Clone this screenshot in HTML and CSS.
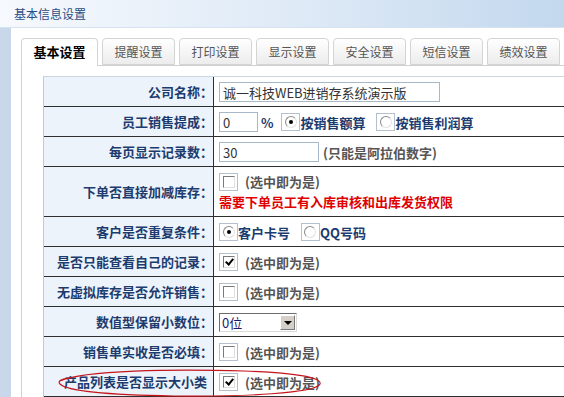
FILE: index.html
```html
<!DOCTYPE html>
<html lang="zh-CN">
<head>
    <meta charset="UTF-8">
    <title>基本信息设置</title>
    <link rel="stylesheet" href="styles.css">
</head>
<body>
    <div class="title-bar">基本信息设置</div>
    <div class="page">
        <div class="tabs">
            <div class="tab active">基本设置</div>
            <div class="tab">提醒设置</div>
            <div class="tab">打印设置</div>
            <div class="tab">显示设置</div>
            <div class="tab">安全设置</div>
            <div class="tab">短信设置</div>
            <div class="tab">绩效设置</div>
        </div>
        <div class="tab-panel">
            <table class="settings">
                <tr>
                    <td class="label">公司名称：</td>
                    <td class="field"><input class="text-input wide" type="text" value="诚一科技WEB进销存系统演示版"></td>
                </tr>
                <tr>
                    <td class="label">员工销售提成：</td>
                    <td class="field">
                        <input class="text-input small" type="text" value="0"><span class="blue-text pct">%</span>
                        <span class="box"><span class="radio on"></span></span><span class="blue-text">按销售额算</span>
                        <span class="box gap"><span class="radio"></span></span><span class="blue-text">按销售利润算</span>
                    </td>
                </tr>
                <tr>
                    <td class="label">每页显示记录数：</td>
                    <td class="field"><input class="text-input medium" type="text" value="30"><span class="gray-text note">(只能是阿拉伯数字)</span></td>
                </tr>
                <tr class="tall">
                    <td class="label">下单否直接加减库存：</td>
                    <td class="field">
                        <div class="line"><span class="box"><span class="check"></span></span><span class="gray-text yes">(选中即为是)</span></div>
                        <div class="line red-text">需要下单员工有入库审核和出库发货权限</div>
                    </td>
                </tr>
                <tr>
                    <td class="label">客户是否重复条件：</td>
                    <td class="field">
                        <span class="box"><span class="radio on"></span></span><span class="blue-text">客户卡号</span>
                        <span class="box gap"><span class="radio"></span></span><span class="blue-text">QQ号码</span>
                    </td>
                </tr>
                <tr>
                    <td class="label">是否只能查看自己的记录：</td>
                    <td class="field"><span class="box"><span class="check on"></span></span><span class="gray-text yes">(选中即为是)</span></td>
                </tr>
                <tr>
                    <td class="label">无虚拟库存是否允许销售：</td>
                    <td class="field"><span class="box"><span class="check"></span></span><span class="gray-text yes">(选中即为是)</span></td>
                </tr>
                <tr>
                    <td class="label">数值型保留小数位：</td>
                    <td class="field">
                        <span class="select"><span class="select-value">0位</span><span class="select-btn"></span></span>
                    </td>
                </tr>
                <tr>
                    <td class="label">销售单实收是否必填：</td>
                    <td class="field"><span class="box"><span class="check"></span></span><span class="gray-text yes">(选中即为是)</span></td>
                </tr>
                <tr>
                    <td class="label no-colon">
                        产品列表是否显示大小类
                        <svg class="circle-mark" width="272" height="30" viewBox="0 0 272 30">
                            <path d="M6 13 C 30 2, 120 1, 190 3 C 240 5, 268 9, 266 16 C 262 25, 190 29, 120 28 C 60 27, 14 24, 6 16 C 3 13, 8 11, 14 10" fill="none" stroke="#c4161c" stroke-width="1.2"/>
                        </svg>
                    </td>
                    <td class="field"><span class="box"><span class="check on"></span></span><span class="gray-text yes">(选中即为是)</span></td>
                </tr>
            </table>
        </div>
    </div>
</body>
</html>
```

FILE: styles.css
```css
* {
    margin: 0;
    padding: 0;
    box-sizing: border-box;
}

html, body {
    overflow: hidden;
}

body {
    width: 564px;
    height: 397px;
    font-family: "Noto Sans CJK SC", "Liberation Sans", sans-serif;
    font-size: 12px;
    color: #333;
    background: #fff;
}

.title-bar {
    height: 28px;
    line-height: 28px;
    padding-left: 14px;
    color: #2b4d83;
    font-size: 12px;
    background: linear-gradient(to right, #f6f9fd, #dde9f6 55%, #c3d8ee);
    border-bottom: 1px solid #d6e2ef;
}

.page {
    border-left: 11px solid #c8d7e9;
    padding: 10px 0 0 10px;
    height: 369px;
}

.tabs {
    display: flex;
    gap: 4px;
    height: 27px;
    position: relative;
    z-index: 1;
}

.tab {
    width: 73px;
    flex: none;
    height: 27px;
    line-height: 26px;
    text-align: center;
    color: #555;
    font-size: 12px;
    border: 1px solid #d4d4d4;
    border-radius: 4px 4px 0 0;
    background: linear-gradient(#ffffff, #ececec);
}

.tab.active {
    width: 77px;
    height: 28px;
    font-size: 13px;
    font-weight: bold;
    color: #000;
    background: #fff;
    border-bottom: none;
}

.tab-panel {
    border-left: 1px solid #d0d0d0;
    border-top: 1px solid #d0d0d0;
    padding: 10px 0 0 21px;
}

.settings {
    width: 521px;
    border-collapse: separate;
    border-spacing: 0;
    border-top: 1px solid #cdd6e0;
    border-left: 1px solid #bccad9;
}

.settings td {
    height: 30px;
    border-bottom: 1px solid #2e2e2e;
    vertical-align: middle;
    font-size: 13px;
}

.settings tr.tall td {
    height: 50px;
}

.label {
    width: 170px;
    background: #edf3fb;
    border-right: 1px solid #2e2e2e;
    text-align: right;
    padding-right: 0;
    font-weight: bold;
    color: #1c3b6e;
    position: relative;
    white-space: nowrap;
}

.label.no-colon {
    padding-right: 6px;
}

.field {
    padding-left: 5px;
    background: #fff;
    white-space: nowrap;
}

.text-input {
    height: 20px;
    border: 1px solid #a9b8c8;
    padding: 0 3px;
    font-family: "Noto Sans CJK SC", "Liberation Sans", sans-serif;
    font-size: 13px;
    color: #333;
    vertical-align: middle;
    outline: none;
}

.text-input.wide {
    width: 221px;
}

.text-input.small {
    width: 39px;
}

.text-input.medium {
    width: 100px;
}

.blue-text {
    font-weight: bold;
    color: #1c3b6e;
    vertical-align: middle;
}

.pct {
    margin: 0 5px 0 3px;
}

.gray-text {
    font-weight: bold;
    color: #555;
    vertical-align: middle;
}

.note {
    margin-left: 4px;
}

.yes {
    margin-left: 7px;
}

.red-text {
    font-weight: bold;
    color: #e00000;
}

.line {
    display: flex;
    align-items: center;
    height: 20px;
    line-height: 20px;
}

.line .gray-text {
    vertical-align: baseline;
}

.box {
    display: inline-flex;
    align-items: center;
    justify-content: center;
    width: 19px;
    height: 18px;
    border: 1px solid #b3c0ce;
    background: #fff;
    vertical-align: middle;
}

.box.gap {
    margin-left: 8px;
}

.check {
    display: block;
    width: 12px;
    height: 12px;
    border: 1px solid;
    border-color: #7a7a7a #e0e0e0 #e0e0e0 #7a7a7a;
    background: #fff;
    position: relative;
}

.check.on::after {
    content: "";
    position: absolute;
    left: 3px;
    top: 0px;
    width: 3px;
    height: 6px;
    border-right: 2px solid #000;
    border-bottom: 2px solid #000;
    transform: rotate(40deg);
}

.radio {
    display: block;
    width: 12px;
    height: 12px;
    border-radius: 50%;
    border: 1px solid;
    border-color: #8a8a8a #e2e2e2 #e2e2e2 #8a8a8a;
    background: #fff;
    position: relative;
}

.radio.on::after {
    content: "";
    position: absolute;
    left: 3px;
    top: 3px;
    width: 4px;
    height: 4px;
    border-radius: 50%;
    background: #000;
}

.select {
    display: inline-flex;
    width: 78px;
    height: 19px;
    border: 1px solid;
    border-color: #6d6d6d #d9d9d9 #d9d9d9 #6d6d6d;
    background: #fff;
    vertical-align: middle;
}

.select-value {
    flex: 1;
    padding-left: 2px;
    line-height: 17px;
    font-size: 13px;
    color: #1a1a6e;
}

.select-btn {
    width: 15px;
    height: 15px;
    margin: 1px;
    background: #d4d0c8;
    border: 1px solid;
    border-color: #fff #7a7a7a #7a7a7a #fff;
    position: relative;
}

.select-btn::after {
    content: "";
    position: absolute;
    left: 3px;
    top: 5px;
    border-left: 4px solid transparent;
    border-right: 4px solid transparent;
    border-top: 4px solid #000;
}

.circle-mark {
    position: absolute;
    left: 10px;
    top: 1px;
    z-index: 2;
    overflow: visible;
}
```
